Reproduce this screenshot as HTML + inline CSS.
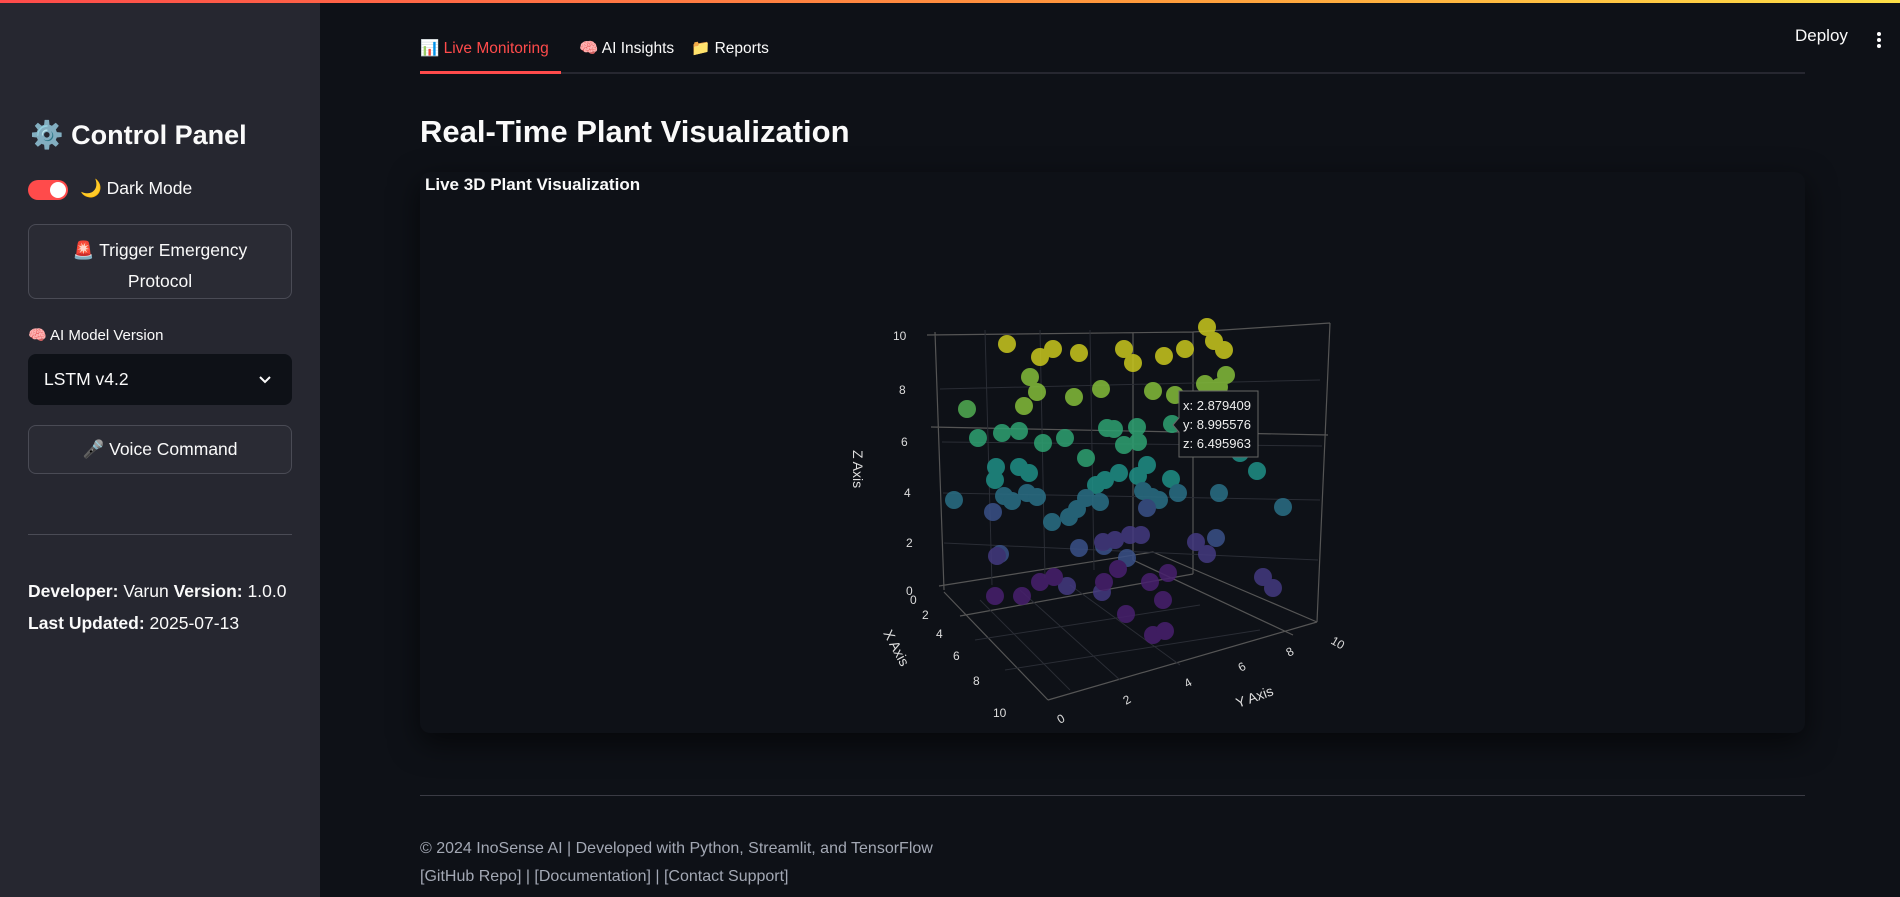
<!DOCTYPE html>
<html><head><meta charset="utf-8"><style>
*{margin:0;padding:0;box-sizing:border-box}
body{width:1900px;height:897px;background:#0e1117;font-family:"Liberation Sans","Noto Sans CJK SC",sans-serif;color:#fafafa;position:relative;overflow:hidden}
.a{position:absolute;white-space:nowrap}
#top{position:absolute;left:0;top:0;width:1900px;height:3px;background:linear-gradient(90deg,#ff4b4b,#ff9a3c 60%,#fde047)}
#side{position:absolute;left:0;top:0;width:320px;height:897px;background:#262730}
.btn{position:absolute;left:28px;width:264px;border:1px solid #4a4b55;border-radius:8px;background:#2a2b34;text-align:center;font-size:17.5px}
</style></head><body>
<div id="side">
<div class="a" style="left:30px;top:119px;font-size:27px;font-weight:bold">⚙️ Control Panel</div>
<div class="a" style="left:28px;top:180px;width:40px;height:20px;border-radius:10px;background:#ff4b4b"></div>
<div class="a" style="left:50px;top:182px;width:16px;height:16px;border-radius:8px;background:#fff"></div>
<div class="a" style="left:80px;top:178px;font-size:17.5px">🌙 Dark Mode</div>
<div class="btn" style="top:224px;height:75px;padding-top:10px;line-height:31px">🚨 Trigger Emergency<br>Protocol</div>
<div class="a" style="left:28px;top:326px;font-size:15px">🧠 AI Model Version</div>
<div class="a" style="left:28px;top:354px;width:264px;height:51px;border-radius:8px;background:#0e1117"></div>
<div class="a" style="left:44px;top:369px;font-size:17.5px">LSTM v4.2</div>
<svg class="a" style="left:258px;top:373px" width="14" height="14"><path d="M2 4l5 5 5-5" stroke="#fafafa" stroke-width="2" fill="none"/></svg>
<div class="btn" style="top:425px;height:49px;line-height:47px">🎤 Voice Command</div>
<div class="a" style="left:28px;top:534px;width:264px;height:1px;background:#4a4b55"></div>
<div class="a" style="left:28px;top:581px;font-size:17.5px"><b>Developer:</b> Varun <b>Version:</b> 1.0.0</div>
<div class="a" style="left:28px;top:613px;font-size:17.5px"><b>Last Updated:</b> 2025-07-13</div>
</div>
<div id="top"></div>
<div class="a" style="left:420px;top:39px;font-size:15.5px;color:#ff4b4b">📊 Live Monitoring</div>
<div class="a" style="left:579px;top:39px;font-size:15.5px">🧠 AI Insights</div>
<div class="a" style="left:691px;top:39px;font-size:15.5px">📁 Reports</div>
<div class="a" style="left:420px;top:72px;width:1385px;height:2px;background:#262730"></div>
<div class="a" style="left:420px;top:71px;width:141px;height:3px;background:#ff4b4b"></div>
<div class="a" style="left:1795px;top:26px;font-size:17px">Deploy</div>
<div class="a" style="left:1877px;top:32px;width:4px;height:4px;border-radius:2px;background:#fff;box-shadow:0 6px 0 #fff,0 12px 0 #fff"></div>
<div class="a" style="left:420px;top:114px;font-size:31px;font-weight:bold">Real-Time Plant Visualization</div>
<div class="a" style="left:420px;top:172px;width:1385px;height:561px;background:#0e1117;border-radius:10px;box-shadow:0 10px 30px rgba(0,0,0,.6)"></div>
<div class="a" style="left:425px;top:175px;font-size:17px;font-weight:bold">Live 3D Plant Visualization</div>
<svg class="a" style="left:0;top:0" width="1900" height="897">
<g stroke="#555" stroke-width="1.2" fill="none">
<path d="M935 332L944 590M927 335L1193 332L1330 323M1133 333L1133 560M1193 332L1193 574M1330 323L1317 622M931 427L1328 435M939 586L1153 552M960 616L1193 574M1133 560L1293 635M1153 552L1317 622M944 592L1048 700M1048 700L1317 622"/>
</g>
<g stroke="#2a2d35" stroke-width="1" fill="none">
<path d="M940 389L1320 380M942 442L1322 446M943 493L1320 500M944 543L1318 560M985 330L992 585M1040 330L1045 578M1090 330L1094 570M975 640L1200 605M1005 670L1260 630M980 600L1070 690M1020 590L1120 680M1070 585L1180 665"/>
</g>
<g opacity="0.85">
<g fill="#c9c81e"><circle cx="1007" cy="344" r="9"/><circle cx="1040" cy="357" r="9"/><circle cx="1053" cy="349" r="9"/><circle cx="1079" cy="353" r="9"/><circle cx="1124" cy="349" r="9"/><circle cx="1133" cy="363" r="9"/><circle cx="1164" cy="356" r="9"/><circle cx="1185" cy="349" r="9"/><circle cx="1207" cy="327" r="9"/><circle cx="1214" cy="341" r="9"/><circle cx="1224" cy="350" r="9"/></g>
<g fill="#84bd3a"><circle cx="1030" cy="377" r="9"/><circle cx="1037" cy="392" r="9"/><circle cx="1024" cy="406" r="9"/><circle cx="1074" cy="397" r="9"/><circle cx="1101" cy="389" r="9"/><circle cx="1153" cy="391" r="9"/><circle cx="1175" cy="395" r="9"/><circle cx="1226" cy="375" r="9"/><circle cx="1205" cy="384" r="9"/><circle cx="1219" cy="387" r="9"/><circle cx="967" cy="409" r="9" fill="#52ae52"/></g>
<g fill="#2ea272"><circle cx="978" cy="438" r="9"/><circle cx="1002" cy="433" r="9"/><circle cx="1019" cy="431" r="9"/><circle cx="1043" cy="443" r="9"/><circle cx="1065" cy="438" r="9"/><circle cx="1107" cy="428" r="9"/><circle cx="1114" cy="429" r="9"/><circle cx="1137" cy="427" r="9"/><circle cx="1124" cy="445" r="9"/><circle cx="1138" cy="442" r="9"/><circle cx="1172" cy="424" r="9"/><circle cx="1086" cy="458" r="9"/></g>
<g fill="#1f8f86"><circle cx="996" cy="467" r="9"/><circle cx="1019" cy="467" r="9"/><circle cx="1029" cy="473" r="9"/><circle cx="995" cy="480" r="9"/><circle cx="1096" cy="485" r="9"/><circle cx="1105" cy="480" r="9"/><circle cx="1119" cy="473" r="9"/><circle cx="1138" cy="476" r="9"/><circle cx="1147" cy="465" r="9"/><circle cx="1171" cy="479" r="9"/><circle cx="1257" cy="471" r="9"/><circle cx="1240" cy="453" r="9"/></g>
<g fill="#2a6f86"><circle cx="954" cy="500" r="9"/><circle cx="1004" cy="496" r="9"/><circle cx="1012" cy="501" r="9"/><circle cx="1027" cy="493" r="9"/><circle cx="1037" cy="497" r="9"/><circle cx="1086" cy="498" r="9"/><circle cx="1100" cy="502" r="9"/><circle cx="1052" cy="522" r="9"/><circle cx="1069" cy="517" r="9"/><circle cx="1077" cy="509" r="9"/><circle cx="1143" cy="491" r="9"/><circle cx="1152" cy="497" r="9"/><circle cx="1159" cy="500" r="9"/><circle cx="1178" cy="493" r="9"/><circle cx="1219" cy="493" r="9"/><circle cx="1283" cy="507" r="9"/></g>
<g fill="#3a5188"><circle cx="993" cy="512" r="9"/><circle cx="1000" cy="554" r="9"/><circle cx="1079" cy="548" r="9"/><circle cx="1104" cy="546" r="9"/><circle cx="1127" cy="558" r="9"/><circle cx="1147" cy="508" r="9"/><circle cx="1216" cy="538" r="9"/></g>
<g fill="#443a80"><circle cx="1196" cy="542" r="9"/><circle cx="997" cy="556" r="9"/><circle cx="1103" cy="542" r="9"/><circle cx="1115" cy="540" r="9"/><circle cx="1130" cy="535" r="9"/><circle cx="1141" cy="535" r="9"/><circle cx="1207" cy="554" r="9"/><circle cx="1263" cy="577" r="9"/><circle cx="1273" cy="588" r="9"/><circle cx="1102" cy="592" r="9"/><circle cx="1067" cy="586" r="9"/></g>
<g fill="#48206e"><circle cx="995" cy="596" r="9"/><circle cx="1022" cy="596" r="9"/><circle cx="1040" cy="582" r="9"/><circle cx="1054" cy="577" r="9"/><circle cx="1104" cy="582" r="9"/><circle cx="1118" cy="569" r="9"/><circle cx="1150" cy="582" r="9"/><circle cx="1163" cy="600" r="9"/><circle cx="1168" cy="573" r="9"/><circle cx="1126" cy="614" r="9"/><circle cx="1153" cy="635" r="9"/><circle cx="1165" cy="631" r="9"/></g>
</g>
<g fill="#ddd" font-family="Liberation Sans,sans-serif" font-size="12">
<text x="893" y="340">10</text><text x="899" y="394">8</text><text x="901" y="446">6</text><text x="904" y="497">4</text><text x="906" y="547">2</text><text x="906" y="595">0</text>
<text x="910" y="604">0</text><text x="922" y="619">2</text><text x="936" y="638">4</text><text x="953" y="660">6</text><text x="973" y="685">8</text><text x="993" y="717">10</text>
<text transform="translate(1060,724) rotate(-30)">0</text><text transform="translate(1126,705) rotate(-30)">2</text><text transform="translate(1187,688) rotate(-30)">4</text><text transform="translate(1241,672) rotate(-30)">6</text><text transform="translate(1289,657) rotate(-30)">8</text><text transform="translate(1330,643) rotate(30)">10</text>
<text font-size="14" transform="translate(853,450) rotate(90)">Z Axis</text>
<text font-size="14" transform="translate(883,633) rotate(62)">X Axis</text>
<text font-size="14" transform="translate(1238,708) rotate(-20)">Y Axis</text>
</g>
<path d="M1179 391H1258V457H1179V432L1173 425L1179 418Z" fill="#0e1117" stroke="#666"/>
<g fill="#eee" font-family="Liberation Sans,sans-serif" font-size="13"><text x="1183" y="410">x: 2.879409</text><text x="1183" y="429">y: 8.995576</text><text x="1183" y="448">z: 6.495963</text></g>
</svg>
<div class="a" style="left:420px;top:795px;width:1385px;height:1px;background:#3a3b44"></div>
<div class="a" style="left:420px;top:840px;font-size:16px;color:#a3a8b4">© 2024 InoSense AI | Developed with Python, Streamlit, and TensorFlow</div>
<div class="a" style="left:420px;top:868px;font-size:16px;color:#a3a8b4">[GitHub Repo] | [Documentation] | [Contact Support]</div>
</body></html>
